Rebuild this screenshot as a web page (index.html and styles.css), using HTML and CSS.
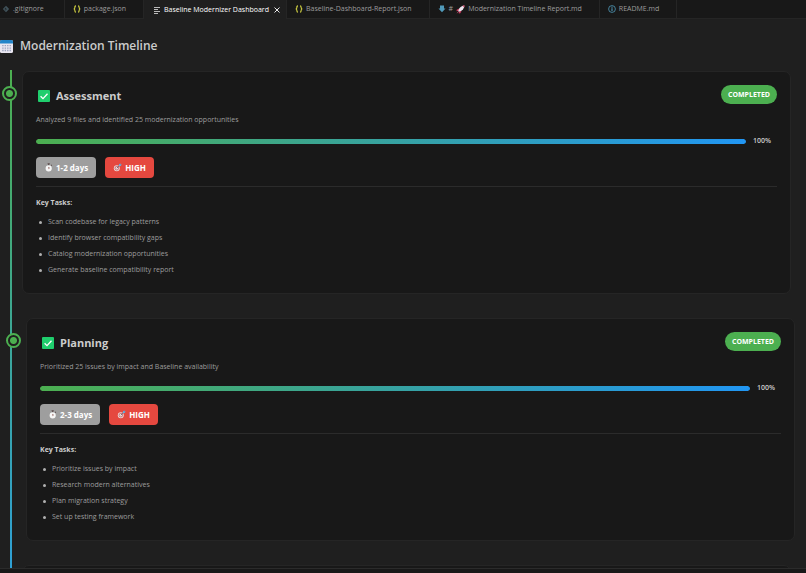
FILE: index.html
```html
<!DOCTYPE html>
<html lang="en">
<head>
    <meta charset="UTF-8">
    <meta name="viewport" content="width=device-width, initial-scale=1.0">
    <title>Baseline Modernizer Dashboard</title>
    <link rel="stylesheet" href="styles.css">
</head>
<body>
    <!-- Shared icons -->
    <svg class="sprite" aria-hidden="true">
        <symbol id="check" viewBox="0 0 12 12">
            <rect width="12" height="12" rx="1" fill="#1fce6d"/>
            <path d="M2.6 6.2 5 8.6 9.5 3.7" fill="none" stroke="#fff" stroke-width="1.3"/>
        </symbol>
        <symbol id="braces" viewBox="0 0 8 8">
            <path d="M3 .8C1.9.8 1.9 1.3 1.9 2.3S1.7 3.8.8 4c.9.2 1.1.7 1.1 1.7S1.9 7.2 3 7.2M5 .8c1.1 0 1.1.5 1.1 1.5S6.3 3.8 7.2 4c-.9.2-1.1.7-1.1 1.7S6.1 7.2 5 7.2" fill="none" stroke="#cbcb41" stroke-width="1.2"/>
        </symbol>
        <symbol id="stopwatch" viewBox="0 0 10 10">
            <path d="M4 .8h2.4M5.2.8v2M7.9 2l.8.8" stroke="#5b4a4a" stroke-width="1.2"/>
            <circle cx="5.2" cy="6" r="3.4" fill="#f6f6f6"/>
            <path d="M5.2 6.2V4.4M5.2 6.2l1.2-.8" stroke="#8d5a55" stroke-width=".8"/>
        </symbol>
        <symbol id="target" viewBox="0 0 10 10">
            <circle cx="4.2" cy="5.8" r="3.3" fill="#f0dcdc"/>
            <circle cx="4.2" cy="5.8" r="2" fill="none" stroke="#b9484c" stroke-width=".8"/>
            <path d="M4.2 5.8 8 2" stroke="#456" stroke-width=".8"/>
            <path d="M6.6 3.4V1.6L8.2.2v1.6h1.6L8.4 3.4z" fill="#55b4ec"/>
        </symbol>
    </svg>

    <nav class="tabs" role="tablist">
        <div class="tab first">
            <svg class="tab-icon" viewBox="0 0 8 8"><path d="M4 .8 7.2 4 4 7.2.8 4z" fill="#41535b"/><path d="M3 2.8 4.9 4.5M3.3 3v2.4" stroke="#1a1a1a" stroke-width=".6"/></svg>
            <button type="button" role="tab">.gitignore</button>
        </div>
        <div class="tab">
            <svg class="tab-icon"><use href="#braces"/></svg>
            <button type="button" role="tab">package.json</button>
        </div>
        <div class="tab active">
            <svg class="tab-icon" viewBox="0 0 8 8"><path d="M1 1.5h6M1 3.5h4M1 5.5h6M1 7.5h4" stroke="#bbb" stroke-width="1"/></svg>
            <button type="button" role="tab" aria-selected="true">Baseline Modernizer Dashboard</button>
            <button type="button" class="close" aria-label="Close">
                <svg viewBox="0 0 6 6"><path d="M.5.5l5 5M5.5.5l-5 5" stroke="#e8e8e8" stroke-width="1"/></svg>
            </button>
        </div>
        <div class="tab">
            <svg class="tab-icon"><use href="#braces"/></svg>
            <button type="button" role="tab">Baseline-Dashboard-Report.json</button>
        </div>
        <div class="tab">
            <svg class="tab-icon" viewBox="0 0 8 8"><path d="M2 .5h4v3h1.5L4 7.3.5 3.5H2z" fill="#519aba"/></svg>
            <button type="button" role="tab">#
                <svg class="rocket" viewBox="0 0 10 10"><path d="M3.5 3.8.8 5.2.6 7l2-.5zM6.2 6.5 4.8 9.2 3 9.4l.5-2z" fill="#d8325b"/><path d="M2.4 6.3C3.6 3 6 .8 9.4.6 9.2 4 7 6.4 3.7 7.6z" fill="#ece4ee"/><path d="M7.1.9C8 .6 8.7.6 9.4.6c0 .8-.1 1.5-.3 2.2z" fill="#e2436b"/><path d="M2.8 6.6.6 9.4l2.8-2z" fill="#e66d8e"/></svg>
                Modernization Timeline Report.md</button>
        </div>
        <div class="tab">
            <svg class="tab-icon" viewBox="0 0 8 8"><circle cx="4" cy="4" r="3.4" fill="none" stroke="#519aba" stroke-width=".8"/><path d="M4 3.3v2.6M4 1.7v1" stroke="#519aba" stroke-width="1.1"/></svg>
            <button type="button" role="tab">README.md</button>
        </div>
    </nav>

    <main class="content">
        <h1 class="page-title">
            <svg class="calendar" viewBox="0 0 13 13"><rect width="13" height="13" rx="1.6" fill="#e9e6f0"/><path d="M0 3.5V1.6Q0 0 1.6 0h9.8Q13 0 13 1.6v1.9z" fill="#2385c9"/><path d="M2.2 5.7h8.8M2.2 8.1h8.8M2.2 10.5h8.8" stroke="#9aa3bd" stroke-width="1.3" stroke-dasharray="1.4 1.05"/></svg>
            Modernization Timeline
        </h1>

        <div class="timeline">
            <section class="phase">
                <div class="phase-header">
                    <h2><svg class="check"><use href="#check"/></svg>Assessment</h2>
                    <span class="status">COMPLETED</span>
                </div>
                <p class="description">Analyzed 9 files and identified 25 modernization opportunities</p>
                <div class="progress">
                    <div class="progress-track"><div class="progress-fill" style="width: 100%"></div></div>
                    <span class="progress-text">100%</span>
                </div>
                <div class="badges">
                    <span class="badge duration"><svg><use href="#stopwatch"/></svg>1-2 days</span>
                    <span class="badge priority"><svg><use href="#target"/></svg>HIGH</span>
                </div>
                <div class="tasks">
                    <h3>Key Tasks:</h3>
                    <ul>
                        <li>Scan codebase for legacy patterns</li>
                        <li>Identify browser compatibility gaps</li>
                        <li>Catalog modernization opportunities</li>
                        <li>Generate baseline compatibility report</li>
                    </ul>
                </div>
            </section>

            <section class="phase shifted">
                <div class="phase-header">
                    <h2><svg class="check"><use href="#check"/></svg>Planning</h2>
                    <span class="status">COMPLETED</span>
                </div>
                <p class="description">Prioritized 25 issues by impact and Baseline availability</p>
                <div class="progress">
                    <div class="progress-track"><div class="progress-fill" style="width: 100%"></div></div>
                    <span class="progress-text">100%</span>
                </div>
                <div class="badges">
                    <span class="badge duration"><svg><use href="#stopwatch"/></svg>2-3 days</span>
                    <span class="badge priority"><svg><use href="#target"/></svg>HIGH</span>
                </div>
                <div class="tasks">
                    <h3>Key Tasks:</h3>
                    <ul>
                        <li>Prioritize issues by impact</li>
                        <li>Research modern alternatives</li>
                        <li>Plan migration strategy</li>
                        <li>Set up testing framework</li>
                    </ul>
                </div>
            </section>

            <section class="phase next"></section>
        </div>
    </main>
    <footer class="panel-edge"></footer>
</body>
</html>
```
FILE: styles.css
```css
*,
*::before {
    box-sizing: border-box;
}

body {
    display: flex;
    flex-direction: column;
    height: 100vh;
    margin: 0;
    overflow: hidden;
    background-color: #1f1f1f;
    color: #cccccc;
    font-family: "Open Sans", "Noto Sans", sans-serif;
    font-size: 7px;
    line-height: 12px;
}

h1, h2, h3, p, ul {
    margin: 0;
}

svg {
    flex: none;
}

.sprite {
    position: absolute;
    width: 0;
    height: 0;
}

/* Editor tabs */
.tabs {
    display: flex;
    flex: none;
    height: 19px;
    background-color: #181818;
    border-bottom: 1px solid #252525;
}

.tab {
    display: flex;
    flex: none;
    align-items: center;
    gap: 3px;
    padding: 0 17px 0 8px;
    border-right: 1px solid #252525;
}

.tab.first {
    padding-left: 2px;
    padding-right: 20px;
}

.tab.active {
    height: 19px;
    padding: 0 6px 0 9px;
    background-color: #1f1f1f;
}

.tab button {
    display: flex;
    align-items: center;
    gap: 3px;
    padding: 0;
    border: none;
    background: none;
    color: #9d9d9d;
    font: inherit;
    white-space: nowrap;
    cursor: pointer;
}

.tab.active button {
    color: #ffffff;
}

.tab-icon {
    width: 8px;
    height: 8px;
}

.rocket {
    width: 9px;
    height: 9px;
}

.tab .close {
    margin-left: 2px;
}

.close svg {
    width: 6px;
    height: 6px;
}

/* Page */
.content {
    flex: 1;
    min-height: 0;
    padding-top: 15px;
    overflow: hidden;
}

.page-title {
    display: flex;
    align-items: center;
    gap: 7px;
    margin-bottom: 12px;
    font-size: 12px;
    font-weight: 600;
    line-height: 24px;
}

.calendar {
    width: 13px;
    height: 13px;
}

/* Timeline */
.timeline {
    position: relative;
    padding: 1px 15px 0 22px;
}

.timeline::before {
    content: "";
    position: absolute;
    top: 0;
    bottom: 0;
    left: 10px;
    width: 2px;
    background: linear-gradient(to bottom, #4caf50, #2d9fdc);
}

.phase {
    position: relative;
    margin-bottom: 24px;
    padding: 13px 13px 15px;
    background-color: #181818;
    border: 1px solid #252525;
    border-radius: 7px;
}

.phase.shifted {
    left: 4px;
}

.phase.next {
    margin-bottom: 0;
}

/* Timeline dot */
.phase:not(.next)::before {
    content: "";
    position: absolute;
    top: 14px;
    left: -21px;
    width: 15px;
    height: 15px;
    background: radial-gradient(circle, #4caf50 0 3px, #1f1f1f 4px);
    border: 2px solid #4caf50;
    border-radius: 50%;
}

.phase-header {
    display: flex;
    justify-content: space-between;
    align-items: center;
    height: 19px;
}

.phase-header h2 {
    display: flex;
    align-items: center;
    gap: 6px;
    padding: 2px 0 0 2px;
    font-size: 11px;
    font-weight: 700;
    line-height: 19px;
}

.check {
    width: 12px;
    height: 12px;
}

.status {
    padding: 0 7px;
    border-radius: 10px;
    background-color: #4caf50;
    color: #ffffff;
    font-weight: 700;
    line-height: 19px;
}

.description {
    margin-top: 10px;
    color: #9d9d9d;
}

.progress {
    display: flex;
    align-items: center;
    gap: 7px;
    margin-top: 9px;
}

.progress-track {
    flex: 1;
    height: 5px;
    border-radius: 3px;
    background-color: #2b2b2b;
    overflow: hidden;
}

.progress-fill {
    height: 100%;
    border-radius: 3px;
    background: linear-gradient(to right, #4caf50, #2196f3);
}

.progress-text {
    min-width: 24px;
    font-weight: 600;
}

.badges {
    display: flex;
    gap: 9px;
    margin-top: 10px;
}

.badge {
    display: flex;
    align-items: center;
    gap: 3px;
    padding: 0 8px;
    border-radius: 4px;
    color: #ffffff;
    font-size: 8px;
    font-weight: 700;
    line-height: 21px;
}

.badge svg {
    width: 9px;
    height: 9px;
}

.duration {
    background-color: #9e9e9e;
}

.priority {
    background-color: #e5483f;
}

.tasks {
    margin-top: 8px;
    padding-top: 10px;
    border-top: 1px solid #2b2b2b;
}

.tasks h3 {
    font-size: 7px;
    font-weight: 700;
}

.tasks ul {
    margin-top: 5px;
    padding-left: 3px;
    list-style: none;
    color: #9d9d9d;
    line-height: 16px;
}

.tasks li {
    display: flex;
    align-items: center;
    gap: 6px;
}

.tasks li::before {
    content: "";
    width: 3px;
    height: 3px;
    border-radius: 50%;
    background-color: #b0b0b0;
}

.panel-edge {
    flex: none;
    height: 5px;
    background-color: #181818;
    border-top: 1px solid #2b2b2b;
}
```
